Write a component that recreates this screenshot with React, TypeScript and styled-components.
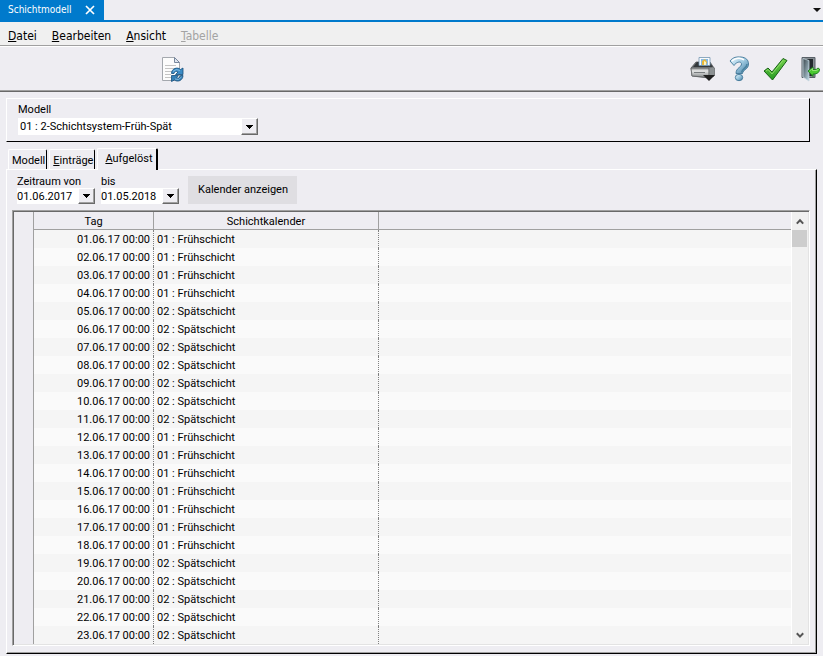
import React, { useState } from "react";
import styled, { createGlobalStyle } from "styled-components";

const face = "#eeedf2";

const GlobalStyle = createGlobalStyle`
  * { box-sizing: border-box; }
  html, body, #root { height: 100%; }
  body {
    margin: 0;
    background: ${face};
    color: #000;
    font: 11px/14px Roboto, "Liberation Sans", Arial, sans-serif;
    overflow: hidden;
  }
  button, input, select { font: inherit; color: inherit; }
`;

const Window = styled.div`
  display: flex;
  flex-direction: column;
  min-height: 100%;
`;

const TitleBar = styled.header`
  display: flex;
  justify-content: space-between;
  height: 22px;
  border-bottom: 2px solid #007acc;
`;

const DocumentTab = styled.div`
  display: flex;
  align-items: center;
  gap: 13px;
  padding: 0 9px 0 8px;
  background: #007acc;
  color: #fff;
  font: 10px/20px "DejaVu Sans Condensed", "DejaVu Sans", sans-serif;
`;

const PlainButton = styled.button`
  display: flex;
  align-items: center;
  justify-content: center;
  padding: 0;
  border: 0;
  background: none;
`;

const MenuBar = styled.nav`
  display: flex;
  align-items: center;
  gap: 15px;
  height: 24px;
  padding: 4px 8px 0;
  background: #f0f0f0;
  border-bottom: 1px solid #a0a0a0;
`;

const MenuItem = styled.button`
  padding: 0;
  border: 0;
  background: none;
  font: 12px/18px "DejaVu Sans Condensed", "DejaVu Sans", sans-serif;
  &:disabled { color: #a3a3a3; }
`;

const Toolbar = styled.div`
  display: flex;
  align-items: center;
  justify-content: space-between;
  height: 46px;
  padding: 0 3px 0 160px;
  border-top: 1px solid #fff;
  border-bottom: 1px solid #696969;
  box-shadow: inset 0 -1px #a0a0a0;
`;

const ToolGroup = styled.div`
  display: flex;
  gap: 13px;
`;

const ModelBox = styled.section`
  display: flex;
  flex-direction: column;
  align-items: flex-start;
  gap: 1px;
  margin: 6px 13px 0 6px;
  padding: 4px 11px 6px;
  border: 1px solid #fff;
  border-right-color: #000;
  border-bottom-color: #000;
`;

const Combo = styled.div<{ $width: number; $height: number }>`
  display: flex;
  position: relative;
  width: ${(p) => p.$width}px;
  height: ${(p) => p.$height}px;
`;

const ComboSelect = styled.select<{ $inset: number }>`
  appearance: none;
  flex: 1;
  min-width: 0;
  padding: 0 18px 0 ${(p) => p.$inset}px;
  border: 0;
  border-radius: 0;
  background: #fff;
  outline: none;
`;

const ComboArrow = styled.span`
  position: absolute;
  inset: 0 0 0 auto;
  display: flex;
  align-items: center;
  justify-content: center;
  width: 17px;
  background: ${face};
  border: 1px solid #fff;
  border-right-color: #696969;
  border-bottom-color: #696969;
  box-shadow: inset -1px -1px #a0a0a0;
  pointer-events: none;
`;

const TabStrip = styled.div`
  display: flex;
  align-items: flex-end;
  margin: 6px 7px 0 8px;
`;

const Tab = styled.button<{ $active: boolean }>`
  position: relative;
  height: ${(p) => (p.$active ? 22 : 20)}px;
  margin: ${(p) => (p.$active ? "0 0 -1px 0" : "0 2px 0 0")};
  padding: ${(p) => (p.$active ? "0 3px 2px 7px" : "2px 1px 0 3px")};
  z-index: ${(p) => (p.$active ? 1 : 0)};
  background: ${face};
  border: 0;
  border-top: 1px solid #fff;
  border-left: 1px solid #fff;
  border-right: ${(p) => (p.$active ? 2 : 1)}px solid #000;
  border-radius: 2px 2px 0 0;
  & + &[aria-selected="true"] { margin-left: -2px; }
`;

const Panel = styled.section`
  margin: 0 6px 2px;
  padding: 5px 5px 7px;
  border: 1px solid #fff;
  border-right-color: #000;
  border-bottom-color: #000;
  box-shadow: inset -1px -1px #a0a0a0;
`;

const FilterRow = styled.div`
  display: flex;
  align-items: flex-end;
  gap: 6px;
  padding-left: 5px;
`;

const Field = styled.div`
  display: flex;
  flex-direction: column;
  line-height: 13px;
`;

const ShowButton = styled.button`
  height: 28px;
  margin-left: 3px;
  padding: 0 9px 0 10px;
  border: 0;
  background: #dfdee2;
`;

const GridFrame = styled.div`
  display: flex;
  margin: 6px 1px 0 0;
  padding: 1px;
  border: 1px solid #fff;
  border-top-color: #a0a0a0;
  border-left-color: #a0a0a0;
  box-shadow: inset 1px 1px #696969, inset -1px -1px #e3e3e3;
`;

const Grid = styled.table`
  flex: 1;
  width: 0;
  table-layout: fixed;
  border-collapse: separate;
  border-spacing: 0;
`;

const Column = styled.col<{ $width?: number }>`
  width: ${(p) => (p.$width ? `${p.$width}px` : "auto")};
`;

const HeadCell = styled.th<{ $last?: boolean }>`
  height: 18px;
  padding: 2px 0 0;
  font-weight: normal;
  background: ${face};
  border-right: ${(p) => (p.$last ? 0 : 1)}px solid #a0a0a0;
  border-bottom: 1px solid #a0a0a0;
`;

const Gutter = styled.th`
  padding: 0;
  background: ${face};
  border-right: 1px solid #a0a0a0;
`;

const Row = styled.tr`
  background: #f5f5f5;
  &:nth-child(even) { background: #fafafa; }
`;

const Cell = styled.td<{ $align?: "left" | "right"; $last?: boolean }>`
  height: 18px;
  padding: 2px 3px 0;
  text-align: ${(p) => p.$align ?? "left"};
  border-right: ${(p) => (p.$last ? 0 : 1)}px dotted #808080;
  white-space: nowrap;
`;

const ScrollBar = styled.div`
  display: flex;
  flex-direction: column;
  width: 17px;
  padding-right: 1px;
  background: #f0f0f0;
  border-left: 1px solid #fff;
`;

const ScrollThumb = styled.div`
  height: 17px;
  background: #cdcdcd;
`;

const ScrollTrack = styled.div`
  flex: 1;
`;

const ScrollButton = styled(PlainButton)`
  height: 18px;
`;

const Triangle = () => (
  <svg width="7" height="4" viewBox="0 0 7 4" shapeRendering="crispEdges" aria-hidden="true">
    <path d="M0 0h7v1H6v1H5v1H4v1H3V3H2V2H1V1H0z" fill="#000" />
  </svg>
);

const Chevron = ({ down = false }: { down?: boolean }) => (
  <svg width="8" height="7" viewBox="0 0 8 7" aria-hidden="true">
    <path
      d={down ? "M.8 1.2 4 4.6l3.2-3.4" : "M.8 5.6 4 2.2l3.2 3.4"}
      fill="none"
      stroke="#555"
      strokeWidth="2"
    />
  </svg>
);

const RefreshPageIcon = () => (
  <svg width="24" height="26" viewBox="0 0 24 26" aria-hidden="true">
    <path d="M2.5 1.5h12l5 5v18h-17z" fill="#fcfcfc" stroke="#a4a8ae" />
    <path d="M14.5 1.5v5h5z" fill="#dfe5ee" stroke="#78879d" />
    <path d="M5 9.5h11M5 12.5h12M5 15.5h8M5 18.5h6M5 21.5h6" stroke="#c4c4c4" />
    <path d="M11.5 17.5c0-5 6-7 9-4l2.5-1.500v6.500h-7.500l2.500-2.500c-2-1-3.500-.5-4 1.500z" fill="#3c8cc5" stroke="#174f7c" strokeWidth=".8" />
    <path d="M23 19.500c0 5-5.500 7-8.500 4.500l-3 1.500v-6h7l-2 2.500c2 .5 3.500 0 4-2.500z" fill="#3580b6" stroke="#174f7c" strokeWidth=".8" />
    <path d="M13 15.500q3-3.500 7-1M21.500 21q-3 4-6.500 2" fill="none" stroke="#8fc4e6" strokeWidth=".8" />
  </svg>
);

const PrinterIcon = () => (
  <svg width="26" height="26" viewBox="0 0 26 26" aria-hidden="true">
    <defs>
      <linearGradient id="printerBody" x1="0" y1="0" x2="0" y2="1">
        <stop stopColor="#8a8c8d" />
        <stop offset=".3" stopColor="#e6e7e7" />
        <stop offset="1" stopColor="#85898a" />
      </linearGradient>
    </defs>
    <path d="m1 12 5-6h14l4 6v8l-5 2-17-2z" fill="#777b7d" stroke="#484b4d" strokeWidth=".7" />
    <path d="m3 11 4-5h12l4 5z" fill="#34383b" />
    <path d="M9 1.500h11v8H9z" fill="#f7fbff" stroke="#7295b0" strokeWidth=".8" />
    <path d="M11 3h7v6h-7z" fill="#86b9e6" />
    <path d="m12 5 3-2 2 3-1 3h-4z" fill="#e9b938" />
    <path d="m14 5 2 1v3h-2z" fill="#fff3c0" />
    <path d="M1 12h18v9.500L2 20z" fill="url(#printerBody)" stroke="#5d6061" strokeWidth=".7" />
    <path d="m19 12 4-1 1.500 1v7L19 22z" fill="#8c9193" stroke="#5d6061" strokeWidth=".5" />
    <path d="M4 16h11v1H4z" fill="#777b7d" />
    <path d="M13 19h12l-6 6z" fill="#202020" />
  </svg>
);

const HelpIcon = () => (
  <svg width="21" height="26" viewBox="0 0 21 26" aria-hidden="true">
    <defs>
      <linearGradient id="helpFill" x1="0" y1="0" x2="1" y2="1">
        <stop stopColor="#e9f8ff" />
        <stop offset=".5" stopColor="#9bc7df" />
        <stop offset="1" stopColor="#417b9f" />
      </linearGradient>
    </defs>
    <path
      d="M1 5C4 1 8 .7 12 1c5 .5 7.500 3 7.500 7 0 5.500-5.500 5.500-6 9.500H7C7 11.500 12.500 11.500 12.500 8c0-3-5-2.500-7.500 1.500z"
      fill="url(#helpFill)"
      stroke="#3e7596"
      strokeWidth=".9"
      strokeLinejoin="round"
    />
    <ellipse cx="10" cy="21.500" rx="3.700" ry="3.200" fill="url(#helpFill)" stroke="#3e7596" strokeWidth=".9" />
    <path d="M3 5C6 1.800 12 1.300 15 4" fill="none" stroke="#fff" strokeWidth="1.500" />
    <path d="M18 8c0 4-5 5-5.500 8.500" fill="none" stroke="#4a829f" strokeWidth="1.500" />
  </svg>
);

const CheckIcon = () => (
  <svg width="25" height="26" viewBox="0 0 25 26" aria-hidden="true">
    <defs>
      <linearGradient id="checkFill" x1="0" y1="0" x2="0" y2="1">
        <stop stopColor="#77d34f" />
        <stop offset="1" stopColor="#259a21" />
      </linearGradient>
    </defs>
    <path d="m1 15 4-3 4 4L20 2.500l4 2L9.500 24z" fill="url(#checkFill)" stroke="#186316" strokeLinejoin="round" />
    <path d="m3 15 2-1.500 4 4.500L20 4.500" fill="none" stroke="#9de273" strokeWidth=".8" />
  </svg>
);

const ExitIcon = () => (
  <svg width="19" height="26" viewBox="0 0 19 26" aria-hidden="true">
    <defs>
      <linearGradient id="doorGlass" x1="0" y1="0" x2="1" y2="1">
        <stop stopColor="#39454b" />
        <stop offset="1" stopColor="#bdd8e5" />
      </linearGradient>
    </defs>
    <path d="M1 1.500h13v20H1z" fill="#858c91" stroke="#596168" />
    <path d="M4 3h8v17H4z" fill="#22292d" />
    <path d="m2 2.500 6 2V25l-6-4z" fill="url(#doorGlass)" stroke="#c3d4dd" strokeWidth=".8" />
    <path d="m7 15 5-4v2.500q4 .5 5-1.500l1.500 1c0 3.500-2 5-6.500 5v2.500z" fill="#4bc931" stroke="#187d1a" strokeWidth=".9" strokeLinejoin="round" />
    <path d="m8.500 15 3-2.500v2q4 .5 6-1" fill="none" stroke="#a7ed87" strokeWidth=".8" />
  </svg>
);

const Shortcut = ({ text }: { text: string }) => (
  <>
    <u>{text[0]}</u>
    {text.slice(1)}
  </>
);

const menus = [
  { title: "Datei" },
  { title: "Bearbeiten" },
  { title: "Ansicht" },
  { title: "Tabelle", disabled: true },
];

const tools = [
  { title: "Drucken", icon: <PrinterIcon /> },
  { title: "Hilfe", icon: <HelpIcon /> },
  { title: "Übernehmen", icon: <CheckIcon /> },
  { title: "Schließen", icon: <ExitIcon /> },
];

const days = Array.from({ length: 23 }, (_, i) => {
  const day = i + 1;
  const early = day <= 4 || (day >= 12 && day <= 18);
  return {
    date: `${String(day).padStart(2, "0")}.06.17 00:00`,
    shift: early ? "01 : Frühschicht" : "02 : Spätschicht",
  };
});

type ComboProps = { id: string; value: string; width: number; height: number; inset?: number };

const ComboBox = ({ id, value, width, height, inset = 0 }: ComboProps) => (
  <Combo $width={width} $height={height}>
    <ComboSelect id={id} $inset={inset} defaultValue={value}>
      <option>{value}</option>
    </ComboSelect>
    <ComboArrow>
      <Triangle />
    </ComboArrow>
  </Combo>
);

export default function App() {
  const [tab, setTab] = useState("Aufgelöst");
  return (
    <Window>
      <GlobalStyle />
      <TitleBar>
        <DocumentTab>
          Schichtmodell
          <PlainButton aria-label="Tab schließen">
            <svg width="10" height="10" viewBox="0 0 10 10" aria-hidden="true">
              <path d="m1 1 8 8M9 1 1 9" stroke="#fff" strokeWidth="1.7" />
            </svg>
          </PlainButton>
        </DocumentTab>
        <PlainButton aria-label="Fensterliste">
          <svg width="11" height="6" viewBox="0 0 11 6" aria-hidden="true">
            <path d="M1 1h8L5 5z" fill="#111" />
          </svg>
        </PlainButton>
      </TitleBar>
      <MenuBar>
        {menus.map((m) => (
          <MenuItem key={m.title} disabled={m.disabled}>
            <Shortcut text={m.title} />
          </MenuItem>
        ))}
      </MenuBar>
      <Toolbar>
        <PlainButton aria-label="Aktualisieren">
          <RefreshPageIcon />
        </PlainButton>
        <ToolGroup>
          {tools.map((t) => (
            <PlainButton key={t.title} aria-label={t.title}>
              {t.icon}
            </PlainButton>
          ))}
        </ToolGroup>
      </Toolbar>
      <ModelBox>
        <label htmlFor="model">Modell</label>
        <ComboBox id="model" value="01 : 2-Schichtsystem-Früh-Spät" width={240} height={17} inset={2} />
      </ModelBox>
      <TabStrip role="tablist">
        {["Modell", "Einträge", "Aufgelöst"].map((t) => (
          <Tab key={t} role="tab" aria-selected={tab === t} $active={tab === t} onClick={() => setTab(t)}>
            {t === "Modell" ? t : <Shortcut text={t} />}
          </Tab>
        ))}
      </TabStrip>
      <Panel>
        <FilterRow>
          <Field>
            <label htmlFor="from">Zeitraum von</label>
            <ComboBox id="from" value="01.06.2017" width={78} height={16} />
          </Field>
          <Field>
            <label htmlFor="to">bis</label>
            <ComboBox id="to" value="01.05.2018" width={78} height={16} />
          </Field>
          <ShowButton>Kalender anzeigen</ShowButton>
        </FilterRow>
        <GridFrame>
          <Grid>
            <colgroup>
              <Column $width={20} />
              <Column $width={120} />
              <Column $width={225} />
              <Column />
            </colgroup>
            <thead>
              <tr>
                <Gutter />
                <HeadCell>Tag</HeadCell>
                <HeadCell>Schichtkalender</HeadCell>
                <HeadCell $last />
              </tr>
            </thead>
            <tbody>
              {days.map((d) => (
                <Row key={d.date}>
                  <Gutter scope="row" />
                  <Cell $align="right">{d.date}</Cell>
                  <Cell>{d.shift}</Cell>
                  <Cell $last />
                </Row>
              ))}
            </tbody>
          </Grid>
          <ScrollBar>
            <ScrollButton aria-label="Nach oben">
              <Chevron />
            </ScrollButton>
            <ScrollThumb />
            <ScrollTrack />
            <ScrollButton aria-label="Nach unten">
              <Chevron down />
            </ScrollButton>
          </ScrollBar>
        </GridFrame>
      </Panel>
    </Window>
  );
}
